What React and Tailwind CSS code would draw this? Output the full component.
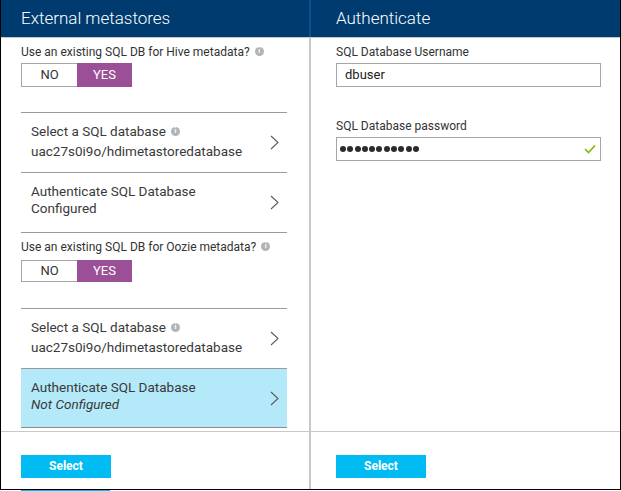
import React from "react"

function Info() {
    return (
        <span className="inline-flex items-center justify-center w-[9px] h-[9px] rounded-full bg-[#b4b4b4] text-white text-[7px] font-bold leading-none ml-[5px] align-middle relative top-[-1px]">
            i
        </span>
    )
}

function Chevron() {
    return (
        <svg width="9" height="15" viewBox="0 0 9 15" className="shrink-0">
            <polyline points="1,1 8,7.5 1,14" fill="none" stroke="#5a5a5a" strokeWidth="1.1" />
        </svg>
    )
}

function Toggle({ h }) {
    return (
        <div className={"flex w-[111px] text-[13px] " + h}>
            <div className="w-[56px] flex items-center justify-center border border-[#a6a6a6] border-r-0 bg-white text-[#333]">NO</div>
            <div className="w-[55px] flex items-center justify-center bg-[#9b4f96] text-white">YES</div>
        </div>
    )
}

function Item({ title, value, info, italic, active }) {
    return (
        <div className={"flex items-center justify-between pl-[10px] pr-[8px] h-[59px] " + (active ? "bg-[#b3e9f8] border-b border-[#8c8c8c]" : "")}>
            <div className="self-start pt-[10px] text-[13.5px] leading-[17px] text-[#3a3a3a]">
                <div>{title}{info && <Info />}</div>
                <div className={(italic ? "italic " : "") + (info ? "mt-[3px]" : "")}>{value}</div>
            </div>
            <Chevron />
        </div>
    )
}

function Question({ text }) {
    return (
        <div className="text-[12px] leading-[16px] text-[#333]">
            {text}<Info />
        </div>
    )
}

function Header({ title, pad }) {
    return (
        <div className={"shrink-0 h-[38px] bg-[#003b6f] border-b border-[#c8c8c8] flex items-center text-white text-[17px] font-light " + pad}>
            {title}
        </div>
    )
}

function Footer({ pad }) {
    return (
        <div className={"shrink-0 h-[58px] border-t border-[#c8c8c8] pt-[21px] " + pad}>
            <button className="w-[90px] h-[23px] bg-[#00bcf2] text-white text-[12px] font-bold">Select</button>
        </div>
    )
}

const dots = Array.from({ length: 11 })

export default function App() {
    return (
        <div className="w-[621px] h-[491px] bg-white overflow-hidden font-['Segoe_UI',Roboto,sans-serif]">
            <div className="flex h-[490px] border-l border-r border-b border-black">
                {/* left blade */}
                <div className="w-[308px] flex flex-col">
                    <Header title="External metastores" pad="pl-[20px]" />
                    <div className="flex-1 min-h-0 pl-[20px] pr-[22px] pt-[6px]">
                        <Question text="Use an existing SQL DB for Hive metadata?" />
                        <div className="mt-[3px]"><Toggle h="h-[24px]" /></div>
                        <div className="mt-[25px] border-t border-[#9a9a9a]">
                            <Item title="Select a SQL database" value="uac27s0i9o/hdimetastoredatabase" info />
                        </div>
                        <div className="border-t border-[#9a9a9a]">
                            <Item title="Authenticate SQL Database" value="Configured" />
                        </div>
                        <div className="border-t border-[#9a9a9a] pt-[6px]">
                            <Question text="Use an existing SQL DB for Oozie metadata?" />
                            <div className="mt-[5px]"><Toggle h="h-[22px]" /></div>
                            <div className="h-[26px]" />
                        </div>
                        <div className="border-t border-[#9a9a9a]">
                            <Item title="Select a SQL database" value="uac27s0i9o/hdimetastoredatabase" info />
                        </div>
                        <div className="border-t border-[#9a9a9a]">
                            <Item title="Authenticate SQL Database" value="Not Configured" italic active />
                        </div>
                    </div>
                    <Footer pad="pl-[20px]" />
                </div>

                {/* divider */}
                <div className="w-[2px] flex flex-col">
                    <div className="h-[37px] bg-[#0b5190]" />
                    <div className="flex-1 bg-[#c8c8c8]" />
                </div>

                {/* right blade */}
                <div className="flex-1 flex flex-col">
                    <Header title="Authenticate" pad="pl-[25px]" />
                    <div className="flex-1 min-h-0 pl-[25px] pr-[19px] pt-[6px]">
                        <div className="text-[12px] leading-[16px] text-[#333]">SQL Database Username</div>
                        <div className="mt-[3px] h-[24px] border border-[#a6a6a6] flex items-center px-[8px] text-[13px] text-[#222]">dbuser</div>
                        <div className="mt-[31px] text-[12px] leading-[16px] text-[#333]">SQL Database password</div>
                        <div className="mt-[3px] h-[24px] border border-[#a6a6a6] flex items-center justify-between pl-[3px] pr-[4px]">
                            <div className="flex gap-[1.3px]" aria-label="password">
                                {dots.map((_, i) => (
                                    <span key={i} className="block w-[6px] h-[6px] rounded-full bg-[#2b2b2b]" />
                                ))}
                            </div>
                            <svg width="12" height="10" viewBox="0 0 12 10">
                                <polyline points="1,5 4.5,8.5 11,1.5" fill="none" stroke="#7fba00" strokeWidth="1.6" />
                            </svg>
                        </div>
                    </div>
                    <Footer pad="pl-[25px]" />
                </div>
            </div>
            <div className="h-px ml-[21px] w-[89px] bg-[#00bcf2]" />
        </div>
    )
}
